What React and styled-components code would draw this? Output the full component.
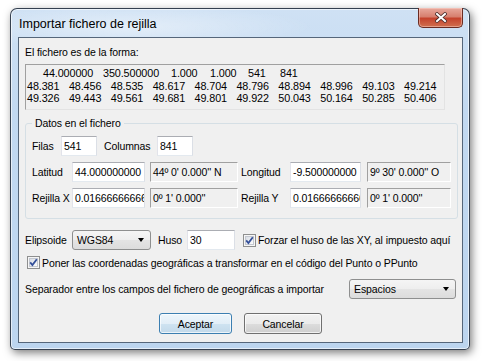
import React from 'react'
import styled, { createGlobalStyle } from 'styled-components'

const GlobalStyle = createGlobalStyle`
  html, body {
    margin: 0;
    padding: 0;
    background: #ffffff;
  }
  body {
    font-family: "Liberation Sans", Arial, sans-serif;
    font-size: 10.5px;
    letter-spacing: -0.1px;
    color: #000;
  }
`

const preview = [
  ['48.381', '48.456', '48.535', '48.617', '48.704', '48.796', '48.894', '48.996', '49.103', '49.214'],
  ['49.326', '49.443', '49.561', '49.681', '49.801', '49.922', '50.043', '50.164', '50.285', '50.406'],
]

const header = [
  { t: '44.000000', w: 60 },
  { t: '350.500000', w: 68 },
  { t: '1.000', w: 39 },
  { t: '1.000', w: 38 },
  { t: '541', w: 32 },
  { t: '841', w: 30 },
]

function CloseGlyph() {
  return (
    <svg width="12" height="11" viewBox="0 0 12 11">
      <path d="M2 2 L10 9 M10 2 L2 9" stroke="#4a2a26" strokeWidth="3.6" strokeLinecap="square" />
      <path d="M2 2 L10 9 M10 2 L2 9" stroke="#ffffff" strokeWidth="2" strokeLinecap="square" />
    </svg>
  )
}

function Check({ label }) {
  return (
    <CheckLabel>
      <svg width="13" height="13" viewBox="0 0 13 13">
        <defs>
          <linearGradient id="cbg" x1="0" y1="0" x2="1" y2="1">
            <stop offset="0" stopColor="#d6dbe3" />
            <stop offset="1" stopColor="#ffffff" />
          </linearGradient>
        </defs>
        <rect x="0.5" y="0.5" width="12" height="12" fill="#f6f6f6" stroke="#8e8f8f" />
        <rect x="2.5" y="2.5" width="8" height="8" fill="url(#cbg)" stroke="#c4c8d0" />
        <path d="M3.2 6.4 L5.4 9 L9.8 3.2" fill="none" stroke="#34509a" strokeWidth="1.8" />
      </svg>
      <span>{label}</span>
    </CheckLabel>
  )
}

function Combo({ value, w }) {
  return (
    <ComboBox $w={w}>
      <span>{value}</span>
      <Arrow />
    </ComboBox>
  )
}

export default function App() {
  return (
    <>
      <GlobalStyle />
      <Page>
        <Window>
          <TitleBar>
            <Title>Importar fichero de rejilla</Title>
            <CloseButton>
              <CloseGlyph />
            </CloseButton>
          </TitleBar>
          <Client>
            <Caption>El fichero es de la forma:</Caption>
            <Preview>
              <HeadLine>
                {header.map((c, i) => (
                  <Cell key={i} $w={c.w}>{c.t}</Cell>
                ))}
              </HeadLine>
              {preview.map((line, i) => (
                <DataLine key={i}>
                  {line.map((v, j) => (
                    <span key={j}>{v}</span>
                  ))}
                </DataLine>
              ))}
            </Preview>

            <Group>
              <Legend>Datos en el fichero</Legend>
              <GroupRow>
                <Label $w={29}>Filas</Label>
                <Field $w={36}>541</Field>
                <Label $w={53} $ml={7}>Columnas</Label>
                <Field $w={36}>841</Field>
              </GroupRow>
              <GroupRow>
                <Label $w={40}>Latitud</Label>
                <Field $w={73}>44.000000000</Field>
                <Field $w={88} $ml={5} $ro>44º 0' 0.000'' N</Field>
                <Label $w={49} $ml={3}>Longitud</Label>
                <Field $w={71}>-9.500000000</Field>
                <Field $w={84} $ml={6} $ro>9º 30' 0.000'' O</Field>
              </GroupRow>
              <GroupRow>
                <Label $w={40}>Rejilla X</Label>
                <Field $w={73}>0.01666666666</Field>
                <Field $w={88} $ml={5} $ro>0º 1' 0.000''</Field>
                <Label $w={49} $ml={3}>Rejilla Y</Label>
                <Field $w={71}>0.01666666666</Field>
                <Field $w={84} $ml={6} $ro>0º 1' 0.000''</Field>
              </GroupRow>
            </Group>

            <Row $mt={11}>
              <Label $w={47}>Elipsoide</Label>
              <Combo value="WGS84" w={79} />
              <Label $w={29} $ml={7}>Huso</Label>
              <Field $w={48}>30</Field>
              <Spacer $w={8} />
              <Check label="Forzar el huso de las XY, al impuesto aquí" />
            </Row>

            <CheckRow>
              <Check label="Poner las coordenadas geográficas a transformar en el código del Punto o PPunto" />
            </CheckRow>

            <Row $mt={10}>
              <Label $w={324}>Separador entre los campos del fichero de geográficas a importar</Label>
              <Combo value="Espacios" w={107} />
            </Row>

            <Buttons>
              <Button $default $w={73}>Aceptar</Button>
              <Button $w={78}>Cancelar</Button>
            </Buttons>
          </Client>
        </Window>
      </Page>
    </>
  )
}

const Page = styled.div`
  width: 482px;
  height: 361px;
  padding: 8px 0 0 10px;
  box-sizing: border-box;
  overflow: hidden;
`

const Window = styled.div`
  width: 460px;
  height: 342px;
  box-sizing: border-box;
  display: flex;
  flex-direction: column;
  padding: 0 6px 6px 7px;
  border: 1px solid rgba(28, 38, 52, 0.85);
  border-radius: 7px 7px 5px 5px;
  background:
    radial-gradient(ellipse 180px 22px at 120px 18px, rgba(255, 255, 255, 0.45), rgba(255, 255, 255, 0) 100%),
    linear-gradient(180deg, #cfe1f4 0%, #c2d9f1 30%, #bcd5ef 100%);
  box-shadow: 2px 3px 9px rgba(0, 0, 0, 0.5), inset 0 0 0 1px rgba(255, 255, 255, 0.6);
`

const TitleBar = styled.div`
  height: 28px;
  display: flex;
  justify-content: space-between;
  align-items: flex-start;
`

const Title = styled.div`
  padding: 8px 0 0 1px;
  font-size: 12.5px;
  letter-spacing: 0;
  line-height: 15px;
  color: #000;
`

const CloseButton = styled.div`
  width: 45px;
  height: 20px;
  margin-top: -1px;
  box-sizing: border-box;
  display: flex;
  align-items: center;
  justify-content: center;
  border: 1px solid #6a2b22;
  border-top: none;
  border-radius: 0 0 5px 5px;
  background: linear-gradient(180deg, #e8a99d 0%, #d7806f 45%, #c5432d 55%, #d0704f 100%);
  box-shadow: inset 0 0 0 1px rgba(255, 220, 210, 0.45);
`

const Client = styled.div`
  flex: 1;
  display: flex;
  flex-direction: column;
  padding: 0 6px;
  background: #f0f0f0;
  border: 1px solid #55667a;
`

const Caption = styled.div`
  margin-top: 8px;
  line-height: 13px;
`

const Preview = styled.div`
  margin-top: 5px;
  width: 420px;
  height: 46px;
  box-sizing: border-box;
  padding: 2px 0 0 1px;
  border: 1px solid;
  border-color: #a0a0a0 #e3e3e3 #e3e3e3 #a0a0a0;
  background: #f0f0f0;
  font-size: 10.8px;
  line-height: 12.5px;
  white-space: nowrap;
`

const HeadLine = styled.div`
  display: flex;
  padding-left: 16px;
`

const Cell = styled.span`
  width: ${(p) => p.$w}px;
  flex: none;
`

const DataLine = styled.div`
  display: grid;
  grid-template-columns: repeat(10, 41.9px);
`

const Group = styled.fieldset`
  margin: 7px 0 0 0;
  width: 430px;
  box-sizing: border-box;
  padding: 6px 6px 10px 6px;
  border: 1px solid #d5dfe5;
  border-radius: 3px;
  display: flex;
  flex-direction: column;
  gap: 6px;
`

const Legend = styled.legend`
  padding: 0 3px;
  line-height: 13px;
`

const GroupRow = styled.div`
  display: flex;
  align-items: center;
  height: 20px;
`

const Row = styled.div`
  display: flex;
  align-items: center;
  height: 20px;
  margin-top: ${(p) => p.$mt}px;
`

const CheckRow = styled.div`
  margin-top: 6px;
  margin-left: 2px;
  height: 13px;
  display: flex;
  align-items: center;
`

const Label = styled.div`
  width: ${(p) => p.$w}px;
  margin-left: ${(p) => p.$ml || 0}px;
  flex: none;
  white-space: nowrap;
`

const Spacer = styled.div`
  width: ${(p) => p.$w}px;
  flex: none;
`

const Field = styled.div`
  width: ${(p) => p.$w}px;
  margin-left: ${(p) => p.$ml || 0}px;
  height: 20px;
  flex: none;
  box-sizing: border-box;
  padding: 0 2px;
  line-height: 18px;
  overflow: hidden;
  white-space: nowrap;
  border: 1px solid;
  border-color: ${(p) =>
    p.$ro ? '#a0a0a0 #ffffff #ffffff #a0a0a0' : '#abadb3 #dbdfe6 #e3e9ef #e2e3ea'};
  background: ${(p) => (p.$ro ? '#f0f0f0' : '#ffffff')};
`

const ComboBox = styled.div`
  width: ${(p) => p.$w}px;
  height: 20px;
  flex: none;
  box-sizing: border-box;
  display: flex;
  align-items: center;
  justify-content: space-between;
  padding: 0 6px 0 4px;
  border: 1px solid #8e8f8f;
  border-radius: 3px;
  background: linear-gradient(180deg, #f5f5f5 0%, #eeeeee 50%, #e4e4e4 51%, #dcdcdc 100%);
`

const Arrow = styled.span`
  width: 0;
  height: 0;
  border-left: 3.5px solid transparent;
  border-right: 3.5px solid transparent;
  border-top: 4px solid #000;
`

const CheckLabel = styled.label`
  display: flex;
  align-items: center;
  gap: 2px;
  white-space: nowrap;
  & svg {
    flex: none;
  }
`

const Buttons = styled.div`
  margin-top: 14px;
  display: flex;
  justify-content: center;
  gap: 12px;
`

const Button = styled.div`
  width: ${(p) => p.$w}px;
  height: 21px;
  box-sizing: border-box;
  display: flex;
  align-items: center;
  justify-content: center;
  border: 1px solid ${(p) => (p.$default ? '#3c7fb1' : '#707070')};
  border-radius: 3px;
  background: ${(p) =>
    p.$default
      ? 'linear-gradient(180deg, #eef6fb 0%, #e2eef7 50%, #cfe3f1 51%, #c2d9ea 100%)'
      : 'linear-gradient(180deg, #f2f2f2 0%, #ebebeb 50%, #dddddd 51%, #cfcfcf 100%)'};
  box-shadow: inset 0 0 0 1px rgba(255, 255, 255, 0.7);
`
